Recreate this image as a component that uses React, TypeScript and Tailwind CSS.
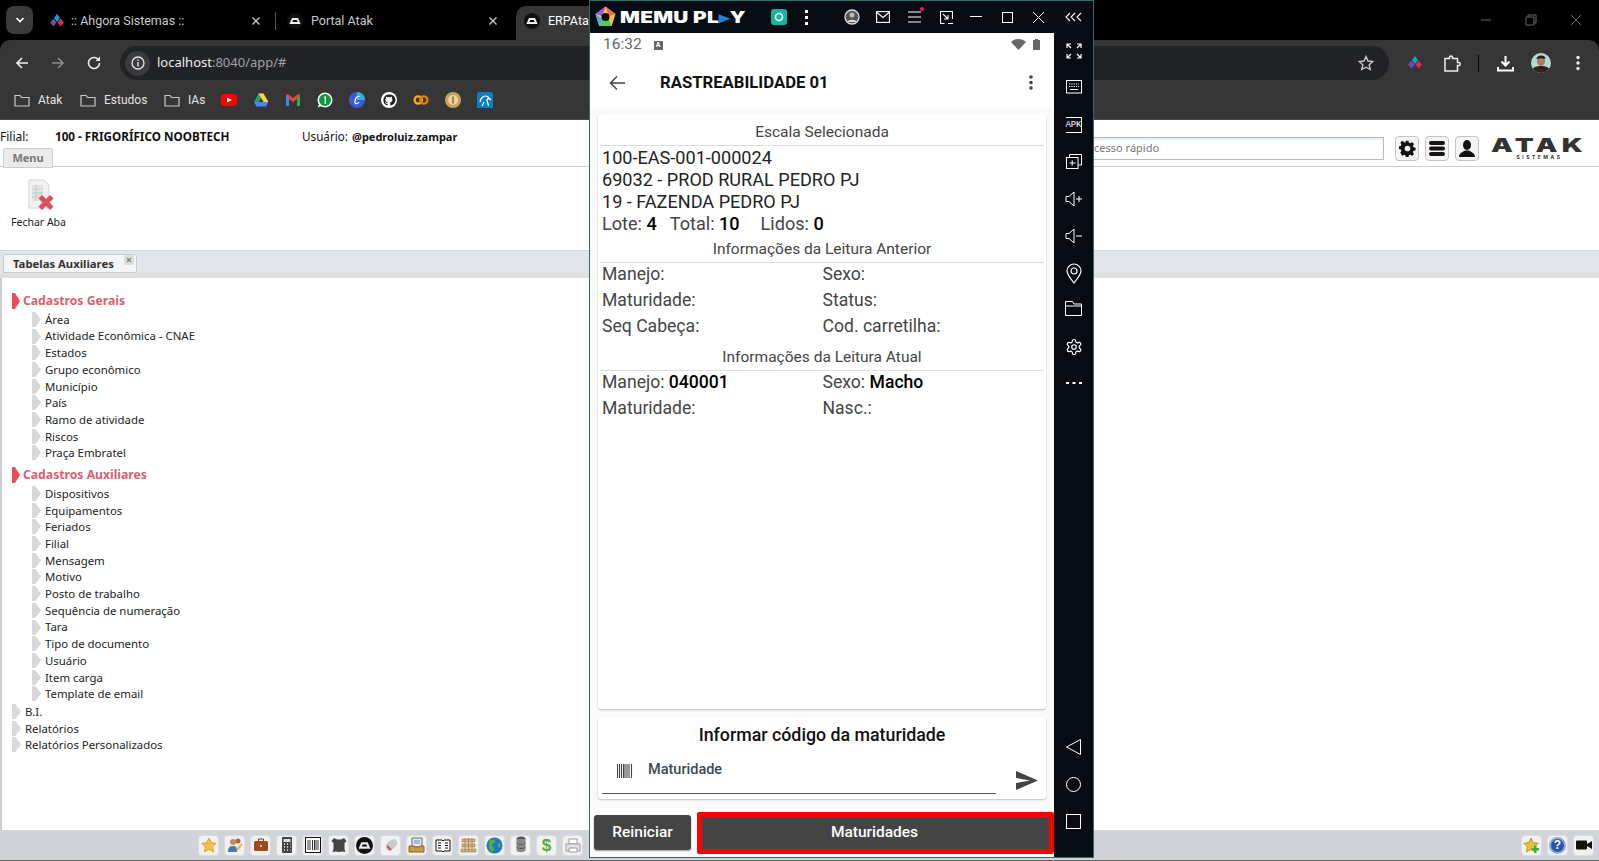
import React from "react";

const S = ({ w, h, vb, children, className = "" }: { w: number; h: number; vb?: string; children: React.ReactNode; className?: string }) => (
  <svg width={w} height={h} viewBox={vb ?? `0 0 ${w} ${h}`} fill="none" className={"block shrink-0 " + className}>{children}</svg>
);

const AhgoraIcon = () => (
  <S w={16} h={16}>
    <path d="M8 1l3 4-3 4-3-4z" fill="#1d9bd8" />
    <path d="M4.5 5.5l3 4-3 4-3.5-4z" fill="#6a4fa3" />
    <path d="M11.5 5.5l3.5 4-3.5 4-3-4z" fill="#e8264f" />
  </S>
);
const AtakRound = ({ s = 16 }: { s?: number }) => (
  <S w={s} h={s} vb="0 0 16 16">
    <circle cx="8" cy="8" r="8" fill="#111" />
    <path d="M5 5h6l2.6 6H2.4z" fill="#eee" />
    <path d="M6.2 7h3.6l.8 2H5.4z" fill="#111" />
  </S>
);
const Folder = () => (
  <S w={16} h={14}>
    <path d="M1 2.5h5l1.5 2h7.5v8.5H1z" stroke="#c8cacc" strokeWidth="1.2" />
  </S>
);
const TabX = ({ c = "#c7c7c7" }: { c?: string }) => (
  <S w={10} h={10}><path d="M1.5 1.5l7 7M8.5 1.5l-7 7" stroke={c} strokeWidth="1.4" /></S>
);

const Bookmark = ({ label, w }: { label: string; w: string }) => (
  <div className={"flex items-center gap-[8px] text-[12px] text-[#e3e3e3] " + w} style={{ fontFamily: "Roboto, sans-serif" }}><Folder /><span>{label}</span></div>
);

const BookmarkIcons = () => (
  <div className="flex items-center gap-[16px]">
    <S w={16} h={16}><rect y="2" width="16" height="12" rx="3" fill="#f00" /><path d="M6 5.5l5 2.5-5 2.5z" fill="#fff" /></S>
    <S w={16} h={16}><path d="M5.5 1.5h5L6 10H1z" fill="#1fa463" /><path d="M5.5 1.5h5l5 8.5h-5z" fill="#ffd04b" /><path d="M1 10h14.5L13 14.5H3.5z" fill="#4688f1" /></S>
    <S w={16} h={16}><path d="M1 3v11h3V7l4 3 4-3v7h3V3l-2-1-5 4-5-4z" fill="#ea4335" /><path d="M1 3v11h3V6z" fill="#4285f4" /><path d="M15 3v11h-3V6z" fill="#34a853" /></S>
    <S w={16} h={16}><circle cx="8" cy="8" r="7.5" fill="#fff" /><circle cx="8" cy="8" r="6" fill="#0a9c3f" /><path d="M0.5 15.5l2-4 2 2.5z" fill="#fff" /><path d="M7 5l2-1v8H7.6V5.8L7 6z" fill="#fff" /></S>
    <S w={16} h={16}><circle cx="8" cy="8" r="8" fill="#3b5bdb" /><path d="M8 0a8 8 0 0 1 8 8H8z" fill="#2fb5d8" /><path d="M10.5 4.5C7 3 5 10 6.5 11.5c1 .6 3-.6 3.6-1.5" stroke="#fff" strokeWidth="1.3" /></S>
    <S w={16} h={16}><circle cx="8" cy="8" r="8" fill="#fff" /><path d="M8 2.5a5.6 5.6 0 0 0-1.8 10.9c.3 0 .4-.1.4-.3v-1.2c-1.5.3-1.9-.7-1.9-.7-.3-.6-.6-.8-.6-.8-.5-.3 0-.3 0-.3.6 0 .9.6.9.6.5.8 1.300.6 1.600.4 0-.3.2-.6.3-.7-1.200-.1-2.500-.6-2.500-2.700 0-.6.2-1.100.6-1.500-.1-.1-.3-.7 0-1.500 0 0 .5-.1 1.500.6a5 5 0 0 1 2.800 0c1-.7 1.500-.6 1.500-.6.3.8.1 1.400 0 1.500.4.4.6.9.6 1.500 0 2.100-1.300 2.600-2.500 2.700.2.2.4.5.4 1v1.900c0 .2.1.3.4.3A5.600 5.600 0 0 0 8 2.500z" fill="#222" /></S>
    <S w={16} h={16}><circle cx="5.2" cy="8" r="3.6" stroke="#f9a825" strokeWidth="2.400" /><circle cx="10.800" cy="8" r="3.600" stroke="#e67c00" strokeWidth="2.400" /></S>
    <S w={16} h={16}><circle cx="8" cy="8" r="8" fill="#c9a25c" /><circle cx="8" cy="8" r="5" fill="#e9d3a3" /><path d="M8 4.500v7" stroke="#a8813c" strokeWidth="2" /></S>
    <S w={16} h={16}><rect width="16" height="18" rx="2" fill="#0b7fc4" /><path d="M3 10c1-6 6-7 8-5l3 3-3-1.500-1 1.500 1.500 6M5 14l2-4" stroke="#fff" strokeWidth="1.200" /></S>
  </div>
);

const ChromeBars = () => (
  <header className="h-[120px] bg-black shrink-0 border-b border-[#4a4a4a]">
    <div className="h-[40px] flex items-start pl-[6px] relative">
      <div className="mt-[6px] w-[27px] h-[28px] rounded-[8px] bg-[#3a3a3a] flex items-center justify-center mr-[16px]">
        <S w={10} h={7}><path d="M1.500 1l3.500 3.500L8.500 1" stroke="#fff" strokeWidth="1.600" /></S>
      </div>
      <div className="flex items-center h-[34px] mt-[4px] w-[212px] text-[12.500px] text-[#c8cacc] justify-between" style={{ fontFamily: "Roboto, sans-serif" }}>
        <div className="flex items-center"><AhgoraIcon /><span className="ml-[6px]">:: Ahgora Sistemas ::</span></div>
        <TabX />
      </div>
      <div className="w-[1px] h-[18px] bg-[#555] mt-[12px] ml-[14px] mr-[11px]" />
      <div className="flex items-center h-[34px] mt-[4px] w-[211px] text-[12.500px] text-[#c8cacc] justify-between" style={{ fontFamily: "Roboto, sans-serif" }}>
        <div className="flex items-center"><AtakRound /><span className="ml-[8px]">Portal Atak</span></div>
        <TabX />
      </div>
      <div className="ml-[18px] mt-[6px] h-[34px] pb-[4px] flex-1 max-w-[140px] rounded-t-[10px] bg-[#363636] pl-[8px] flex items-center text-[12.500px] text-white" style={{ fontFamily: "Roboto, sans-serif" }}>
        <AtakRound /><span className="ml-[8px]">ERPAtak</span>
      </div>
      <div className="ml-auto mr-[17px] mt-[14px] flex items-center gap-[33px]">
        <S w={12} h={12}><path d="M1 6h10" stroke="#666" /></S>
        <S w={12} h={12}><path d="M1 3h8v8H1zM3 3V1h8v8H9" stroke="#666" /></S>
        <S w={12} h={12}><path d="M1 1l10 10M11 1L1 11" stroke="#666" /></S>
      </div>
    </div>
    <div className="h-[79px] bg-[#363636] rounded-t-[10px]">
      <div className="h-[46px] flex items-center relative">
        <div className="w-[120px] flex items-center pl-[15px] gap-[22px] shrink-0">
          <S w={14} h={14}><path d="M13 7H2M7 2L2 7l5 5" stroke="#eee" strokeWidth="1.600" /></S>
          <S w={14} h={14}><path d="M1 7h11M7 2l5 5-5 5" stroke="#8c8c8c" strokeWidth="1.600" /></S>
          <S w={14} h={14}><path d="M12.500 7a5.500 5.500 0 1 1-1.600-3.900" stroke="#eee" strokeWidth="1.600" /><path d="M13 0.500v4.500H8.500z" fill="#eee" /></S>
        </div>
        <div className="w-[1269px] h-[34px] rounded-full bg-[#212327] flex items-center pl-[5px] pr-[15px]">
          <div className="w-[25px] h-[25px] rounded-full bg-[#3a3b3e] flex items-center justify-center">
            <S w={14} h={14}><circle cx="7" cy="7" r="6" stroke="#e8e8e8" strokeWidth="1.300" /><path d="M7 6v4.500M7 3.500v1.500" stroke="#e8e8e8" strokeWidth="1.400" /></S>
          </div>
          <span className="ml-[7px] text-[13px] text-[#eee]">localhost<span className="text-[#a0a2a5]">:8040/app/#</span></span>
          <div className="ml-auto">
            <S w={16} h={16}><path d="M8 1.500l2 4.500 4.800.5-3.600 3.200 1 4.800L8 12.200l-4.200 2.300 1-4.800L1.200 6.500 6 6z" stroke="#c8c8c8" strokeWidth="1.400" /></S>
          </div>
        </div>
        <div className="ml-[18px] flex items-center">
          <AhgoraIcon />
          <div className="ml-[21px]"><S w={17} h={17}><path d="M1 3.500h4.500V2c0-1.500 3-1.500 3 0v1.500H13.500v4h1.500c1.500 0 1.500 3 0 3h-1.500v5.500H1z" stroke="#eee" strokeWidth="1.500" /></S></div>
          <div className="w-[1px] h-[17px] bg-black ml-[17px]" />
          <div className="ml-[18px]"><S w={17} h={17}><path d="M8.500 1v9M4.500 6.500l4 4 4-4" stroke="#fff" strokeWidth="2" /><path d="M1 12v3.500h15V12" stroke="#fff" strokeWidth="2" /></S></div>
          <div className="ml-[17px]">
            <svg width="20" height="20" viewBox="0 0 20 20" className="block rounded-full">
              <rect width="20" height="20" fill="#b9d6cc" />
              <path d="M0 20c1-6 5-7 10-7s9 1 10 7z" fill="#2e2322" />
              <ellipse cx="10" cy="8" rx="4" ry="5" fill="#a87c66" />
              <path d="M5.500 6c0-4 8-5 9-1l-1 1c-2-1-5-1-7 0z" fill="#2a1f1c" />
            </svg>
          </div>
          <div className="ml-[25px]"><S w={4} h={16}><circle cx="2" cy="2.500" r="1.700" fill="#eee" /><circle cx="2" cy="8" r="1.700" fill="#eee" /><circle cx="2" cy="13.500" r="1.700" fill="#eee" /></S></div>
        </div>
      </div>
      <div className="h-[28px] flex items-center pl-[14px]">
        <Bookmark label="Atak" w="w-[66px]" />
        <Bookmark label="Estudos" w="w-[84px]" />
        <Bookmark label="IAs" w="w-[57px]" />
        <BookmarkIcons />
      </div>
    </div>
  </header>
);

const Gear = ({ s, c }: { s: number; c: string }) => (
  <S w={s} h={s} vb="0 0 24 24">
    <path d="M10 1h4l.6 3 2.200.9 2.500-1.700 2.800 2.800-1.700 2.500.9 2.200 3 .6v4l-3 .6-.9 2.200 1.700 2.500-2.800 2.800-2.500-1.700-2.200.9-.6 3h-4l-.6-3-2.200-.9-2.500 1.700L1.900 18.600l1.700-2.500-.9-2.200-3-.6v-4l3-.6.9-2.200L1.900 4 4.700 1.200 7.200 2.900 9.400 4z" transform="translate(0 0) scale(0.96)" fill={c} />
    <circle cx="12" cy="12" r="4" fill="#f4f4f4" />
  </S>
);

const IconBtn = ({ children }: { children: React.ReactNode }) => (
  <div className="w-[24px] h-[25px] rounded-[4px] border border-[#c4c4c4] bg-[#f4f4f4] flex items-center justify-center">{children}</div>
);

const TopHeader = () => (
  <div className="h-[47px] relative shrink-0 border-b border-[#ccc] bg-white">
    <div className="flex items-center h-[34px] text-[12px] text-[#111]">
      <span className="w-[55px]">Filial:</span>
      <b className="w-[247px] text-[11.700px]">100 - FRIGORÍFICO NOOBTECH</b>
      <span className="w-[50px] text-[11.700px]">Usuário:</span>
      <b className="text-[11px]">@pedroluiz.zampar</b>
    </div>
    <div className="absolute left-[3px] top-[28px] h-[20px] w-[50px] rounded-t-[3px] border border-[#ccc] bg-[#eaeaea] flex items-center justify-center text-[11px] font-bold text-[#777]">Menu</div>
    <div className="absolute right-[13px] top-[16px] flex items-center">
      <div className="w-[340px] h-[23px] border border-[#b4bccb] bg-white text-[11px] text-[#777] pl-[42px] flex items-center shadow-[inset_0_2px_3px_#e5ece8]">Acesso rápido</div>
      <div className="ml-[11px] flex gap-[6px]">
        <IconBtn><Gear s={17} c="#111" /></IconBtn>
        <IconBtn>
          <S w={18} h={17}><rect x="1" y="1" width="16" height="4" rx="2" fill="#1a1212" /><rect x="1" y="6.500" width="16" height="4" rx="2" fill="#1a1212" /><rect x="1" y="12" width="16" height="4" rx="2" fill="#1a1212" /></S>
        </IconBtn>
        <IconBtn>
          <S w={18} h={19}><ellipse cx="9" cy="6" rx="4" ry="5" fill="#111" /><path d="M1 18c0-4 4-5 6-6.500h4c2 1.500 6 2.500 6 6.500z" fill="#111" /></S>
        </IconBtn>
      </div>
      <div className="ml-[14px] w-[93px] flex flex-col items-center text-[#333] leading-none" style={{ fontFamily: "Inter, sans-serif" }}>
        <span className="text-[19px] font-black tracking-[3px] h-[16px] leading-[16px] scale-x-[1.450]">ATAK</span>
        <span className="text-[5px] font-bold tracking-[2.500px] mt-[1px]">SISTEMAS</span>
      </div>
    </div>
  </div>
);

const Ribbon = () => (
  <div className="h-[84px] shrink-0 bg-white border-b border-[#d4d8dc] pl-[11px] pt-[12px]">
    <div className="w-[55px] flex flex-col items-center">
      <S w={32} h={32}>
        <path d="M6 1h15l5 5v23H6z" fill="#f1f1f1" stroke="#d5d5d5" />
        <path d="M9 6h11v16H9z" fill="#e3e3e3" />
        <path d="M9 10h11M9 14h11M9 18h11M13 6v16" stroke="#c9c9c9" />
        <path d="M19 16l4 4 4-4 3.500 3.500-4 4 4 4L27 31l-4-4-4 4-3.500-3.500 4-4-4-4z" fill="#d9505b" />
      </S>
      <span className="text-[10.500px] text-[#222] mt-[4px] whitespace-nowrap">Fechar Aba</span>
    </div>
  </div>
);

const TabStrip = () => (
  <div className="h-[27px] shrink-0 bg-[#e2e6ea] border-b-[5px] border-[#dfdfdf] pl-[3px] pt-[3px]">
    <div className="h-[19px] w-[134px] rounded-t-[3px] border border-[#ccc] bg-[#f4f5f6] flex items-center pl-[9px] pt-[1px] text-[11.300px] font-bold text-[#333] relative">
      Tabelas Auxiliares
      <span className="absolute right-[2px] top-[0px] w-[10px] h-[10px] rounded-[2px] bg-[#ddd] flex items-center justify-center">
        <S w={6} h={6}><path d="M1 1l4 4M5 1L1 5" stroke="#888" strokeWidth="1.200" /></S>
      </span>
    </div>
  </div>
);

const Marker = ({ c, w, h }: { c: string; w: number; h: number }) => (
  <svg width={w} height={h} viewBox="0 0 8 16" preserveAspectRatio="none" className="shrink-0"><path d="M0 0h3l5 8-5 8H0z" fill={c} /></svg>
);

const Group = ({ title, items, pb }: { title: string; items: string[]; pb: string }) => (
  <div>
    <div className="h-[20px] flex items-center pl-[10px] text-[12.200px] font-bold text-[#d9606e]">
      <Marker c="#ec4c60" w={8} h={16} /><span className="ml-[3px]">{title}</span>
    </div>
    <div className={pb}>
      {items.map((i) => (
        <div key={i} className="h-[16.700px] flex items-center pl-[30px] text-[11.400px] text-[#222]">
          <Marker c="#d8d8d8" w={9} h={15} /><span className="ml-[4px] whitespace-nowrap">{i}</span>
        </div>
      ))}
    </div>
  </div>
);

const Leaf = ({ t }: { t: string }) => (
  <div className="h-[16.700px] flex items-center pl-[10px] text-[11.400px] text-[#222]">
    <Marker c="#d8d8d8" w={9} h={15} /><span className="ml-[4px]">{t}</span>
  </div>
);

const Tree = () => (
  <div className="flex-1 bg-white border-l-[2px] border-[#ccc] pt-[13px] min-h-0">
    <Group pb="pb-[4px]" title="Cadastros Gerais" items={["Área", "Atividade Econômica - CNAE", "Estados", "Grupo econômico", "Município", "País", "Ramo de atividade", "Riscos", "Praça Embratel"]} />
    <Group pb="pb-[1px]" title="Cadastros Auxiliares" items={["Dispositivos", "Equipamentos", "Feriados", "Filial", "Mensagem", "Motivo", "Posto de trabalho", "Sequência de numeração", "Tara", "Tipo de documento", "Usuário", "Item carga", "Template de email"]} />
    <Leaf t="B.I." />
    <Leaf t="Relatórios" />
    <Leaf t="Relatórios Personalizados" />
  </div>
);

const TB = ({ children }: { children: React.ReactNode }) => (
  <div className="w-[21px] h-[21px] rounded-[4px] bg-[#f1f1f1] border border-[#dcdcdc] flex items-center justify-center">{children}</div>
);

const star = "M8 1l2.200 4.600 5 .7-3.600 3.500.9 5L8 12.400 3.500 14.800l.9-5L.8 6.300l5-.7z";

const BottomBar = () => (
  <div className="h-[31px] shrink-0 bg-[#d0d4d8] border-b border-[#666] flex items-center pl-[198px] pr-[5px] gap-[5px]">
    <TB><S w={16} h={16}><path d={star} fill="#f5c04a" stroke="#e0a030" /></S></TB>
    <TB><S w={16} h={16}><circle cx="6" cy="5" r="3" fill="#c98b5a" /><circle cx="11" cy="4" r="2.500" fill="#a86a3c" /><path d="M1 15c0-5 2-6 5-6s4 1 4 6z" fill="#3f7fc4" /><path d="M15 7l-5 6" stroke="#e8b93c" strokeWidth="2" /></S></TB>
    <TB><S w={16} h={14}><rect x="1" y="3" width="14" height="10" rx="1.500" fill="#9c4a20" /><path d="M5.500 3V1h5v2" stroke="#6b3415" /><rect x="7" y="7" width="2" height="2" fill="#eac07a" /></S></TB>
    <TB><S w={12} h={16}><rect x="1" width="10" height="16" rx="1" fill="#444" /><rect x="2.500" y="2" width="7" height="3" fill="#ddd" /><path d="M3 7h1M6 7h1M9 7h.5M3 10h1M6 10h1M9 10h.5M3 13h1M6 13h1M9 13h.5" stroke="#eee" strokeWidth="1.500" /></S></TB>
    <TB><S w={16} h={16}><rect x=".5" y=".5" width="15" height="15" fill="#fff" stroke="#111" /><path d="M3 3v10M5 3v10M7.500 3v10M9.500 3v10M11 3v10M13 3v10" stroke="#333" /></S></TB>
    <TB><S w={16} h={16}><path d="M3 1l3 1.500h4L13 1l2.500 3-2 2v6l1 3-3-.5L8 15l-3.500-.5-3 .5 1-3V6l-2-2z" fill="#444" /></S></TB>
    <TB><AtakRound s={17} /></TB>
    <TB><S w={16} h={16}><path d="M3 10c-1-3 5-8 8-8 2 0 4 3 3 5-1 3-6 7-8 7-1.500 0-2.500-2-3-4z" fill="#c9c9c9" /><path d="M4 9l4 4" stroke="#c84c4c" strokeWidth="2" /></S></TB>
    <TB><S w={17} h={16}><path d="M4 1h10v9H4z" fill="#dfe8f4" stroke="#5a6c8a" /><path d="M6 4h6M6 6h6" stroke="#7a8ca8" /><path d="M1 9h5l1 1h4l1-1h4v6H1z" fill="#c99a48" stroke="#8a6420" /></S></TB>
    <TB><S w={16} h={14}><path d="M1 2h6l1 1 1-1h6v11H9l-1 1-1-1H1z" fill="#fff" stroke="#111" /><path d="M3 5h3M3 7.500h3M3 10h3M10 5h3M10 7.500h3M10 10h3" stroke="#111" /></S></TB>
    <TB><S w={17} h={16}><path d="M2 2h13v3H2zM2 7h13v3H2zM1 12h15v3H1z" fill="#d3b581" stroke="#96784a" strokeWidth=".6" /><path d="M5 1v14M8.500 1v14M12 1v14" stroke="#a88a5a" /></S></TB>
    <TB><S w={17} h={17}><circle cx="8.500" cy="8.500" r="8" fill="#1e78c8" /><path d="M4 3c3-2 6 0 5 2s-3 1-3 3 2 2 2 4-1 3-2 3c-3-2-4-7-2-12zM12 6c2 0 3 2 2 5l-2-1z" fill="#5cb030" /></S></TB>
    <TB><S w={12} h={18}><ellipse cx="6" cy="3" rx="4.500" ry="2.500" fill="#555" /><path d="M1.500 3v11c0 3 9 3 9 0V3" fill="#8a8a8a" /><path d="M1.500 7c2 2 7 2 9 0M1.500 11c2 2 7 2 9 0" stroke="#555" /></S></TB>
    <TB><span className="text-[17px] font-bold text-[#59a93a] leading-none" style={{ fontFamily: "Liberation Sans, sans-serif" }}>$</span></TB>
    <TB><S w={16} h={15}><path d="M4 1h8v5H4z" fill="#fff" stroke="#999" /><rect x="1" y="6" width="14" height="7" fill="#e4e4e4" stroke="#999" /><path d="M4 10h8v4H4z" fill="#fff" stroke="#999" /></S></TB>
    <div className="ml-auto flex items-center gap-[5px]">
      <TB><S w={17} h={17}><path d={star} fill="#e9c23c" stroke="#b9962a" /><path d="M11 8.500h2.500V11H16v2.500h-2.500V16H11v-2.500H8.500V11H11z" fill="#3fae3a" /></S></TB>
      <TB><div className="w-[17px] h-[17px] rounded-full bg-[#2a56b0] border-[2px] border-[#8fa8d8] text-white text-[12px] font-bold flex items-center justify-center leading-none" style={{ fontFamily: "Liberation Sans, sans-serif" }}>?</div></TB>
      <TB><S w={16} h={10}><rect y="0.500" width="11" height="9" rx="1" fill="#111" /><path d="M11 4l5-3v8l-5-3z" fill="#111" /></S></TB>
    </div>
  </div>
);

const Row = ({ l, v, r, rv }: { l: string; v?: string; r: string; rv?: string }) => (
  <div className="h-[26px] grid grid-cols-[220.500px_1fr] items-center text-[17.600px] text-[#444]">
    <span>{l}{v && <> <b className="font-medium text-black">{v}</b></>}</span>
    <span>{r}{rv && <> <b className="font-medium text-black">{rv}</b></>}</span>
  </div>
);

const SectionTitle = ({ t }: { t: string }) => (
  <div className="h-[27px] text-center text-[15.500px] text-[#444] leading-[26px] border-b border-[#ddd] -mx-[2px] mb-[-2px]">{t}</div>
);

const TitleBar = () => (
  <div className="h-[32px] flex items-center bg-[#070c14] text-white shrink-0">
    <div className="ml-[5px]">
      <S w={21} h={22}>
        <path d="M10.500 0.500L20.500 8l-3.800 12H4.300L0.500 8z" fill="#f6c33a" />
        <path d="M10.500 0.500L20.500 8 14 10z" fill="#ef6a5a" />
        <path d="M10.500 0.500L0.500 8 7 10z" fill="#8a5cf0" />
        <path d="M0.500 8l3.800 12 3-7z" fill="#4aa8ee" />
        <path d="M4.300 20h12.400l-3-7H7z" fill="#5ac85a" />
        <circle cx="10.500" cy="11" r="4" fill="#070c14" />
      </S>
    </div>
    <span className="ml-[4px] w-[128px] text-[16px] font-black tracking-[0.200px] whitespace-nowrap leading-none scale-x-[1.300] origin-left" style={{ fontFamily: "Inter, sans-serif" }}>MEMU PL<span className="text-[#1b87d6]">▸</span>Y</span>
    <div className="ml-[23px] w-[16px] h-[16px] rounded-[3px] bg-[#13b59c] flex items-center justify-center">
      <S w={10} h={10}><circle cx="5" cy="5" r="3.500" stroke="#fff" strokeWidth="1.500" /></S>
    </div>
    <div className="ml-[18px]"><S w={3} h={15}><rect width="3" height="3" fill="#fff" /><rect y="6" width="3" height="3" fill="#fff" /><rect y="12" width="3" height="3" fill="#fff" /></S></div>
    <div className="ml-[36px]"><S w={16} h={16}><circle cx="8" cy="8" r="7" stroke="#ddd" strokeWidth="1.300" fill="#555" /><circle cx="8" cy="6" r="2.500" fill="#bbb" /><path d="M3.500 13c1-3 8-3 9 0" fill="#ddd" /></S></div>
    <div className="ml-[16px]"><S w={14} h={12}><rect x=".6" y=".6" width="12.800" height="10.800" stroke="#fff" strokeWidth="1.100" /><path d="M1 1.500l6 5 6-5" stroke="#fff" strokeWidth="1.100" /></S></div>
    <div className="ml-[18px] relative"><S w={13} h={12}><path d="M0 1h13M0 6h13M0 11h13" stroke="#fff" strokeWidth="1.100" /></S><span className="absolute -top-[4px] -right-[3px] w-[4px] h-[4px] rounded-full bg-[#ff1166]" /></div>
    <div className="ml-[19px]"><S w={13} h={13}><path d="M12.500 8V.5H.5v12h4" stroke="#fff" strokeWidth="1.100" /><path d="M3 3l5 5M4 8h4V4M8 12.500h5" stroke="#fff" strokeWidth="1.100" /></S></div>
    <div className="ml-[17px]"><S w={12} h={2}><rect width="12" height="1" fill="#fff" /></S></div>
    <div className="ml-[20px]"><S w={11} h={11}><rect x=".5" y=".5" width="10" height="10" stroke="#fff" /></S></div>
    <div className="ml-[20px]"><S w={11} h={11}><path d="M0 0l11 11M11 0L0 11" stroke="#fff" /></S></div>
    <div className="ml-[21px]"><S w={17} h={10}><path d="M5 1L1 5l4 4M10 1L6 5l4 4M16 1l-4 4 4 4" stroke="#fff" strokeWidth="1.100" /></S></div>
  </div>
);

const SideBar = () => (
  <div className="w-[39px] bg-[#070c14] flex flex-col items-center pt-[10px] shrink-0">
    <div className="h-[37px] flex items-start"><S w={16} h={16}><path d="M1 5V1h4M1 1l4 4M11 1h4v4M15 1l-4 4M1 11v4h4M1 15l4-4M15 11v4h-4M15 15l-4-4" stroke="#fff" strokeWidth="1.200" /></S></div>
    <div className="h-[37px] flex items-start"><S w={16} h={14}><rect x=".5" y=".5" width="15" height="12.500" stroke="#fff" /><path d="M3 4h10M3 6.500h10" stroke="#fff" strokeDasharray="1.300 1" /><path d="M4 9.500h8" stroke="#fff" /></S></div>
    <div className="h-[37px] flex items-start"><div className="w-[16px] h-[16px] border-r border-t border-b border-white text-white text-[9px] leading-none flex items-center justify-start tracking-[-0.200px]" style={{ fontFamily: "Liberation Mono, monospace" }}>APK</div></div>
    <div className="h-[37px] flex items-start"><S w={16} h={15}><rect x=".5" y="3.500" width="11.500" height="11" stroke="#fff" /><path d="M3.500 3.500V.5h12v10.500H12M3.500 9h6M6.200 6.300v5.500" stroke="#fff" /></S></div>
    <div className="h-[37px] flex items-start"><S w={18} h={16}><path d="M1 5.500h3L9 1v14L4 10.500H1z" stroke="#fff" /><path d="M11 8h6M14 5v6" stroke="#fff" /></S></div>
    <div className="h-[35px] flex items-start"><S w={18} h={16}><path d="M1 5.500h3L9 1v14L4 10.500H1z" stroke="#fff" /><path d="M11 8h6" stroke="#fff" /></S></div>
    <div className="h-[38px] flex items-start"><S w={16} h={21}><path d="M8 20C4 15 1 11 1 8a7 7 0 0 1 14 0c0 3-3 7-7 12z" stroke="#fff" strokeWidth="1.200" /><circle cx="8" cy="8" r="3" stroke="#fff" strokeWidth="1.200" /></S></div>
    <div className="h-[37px] flex items-start"><S w={17} h={15}><path d="M.5 14.500V.5h7l1.500 2.500h7.500v11.500zM.5 5h16" stroke="#fff" /></S></div>
    <div className="h-[37px] flex items-start"><Gear2 /></div>
    <div className="mt-[7px]"><S w={16} h={2}><rect width="3" height="2" fill="#fff" /><rect x="6.500" width="3" height="2" fill="#fff" /><rect x="13" width="3" height="2" fill="#fff" /></S></div>
    <div className="mt-auto mb-[28px] flex flex-col items-center gap-[22px]">
      <S w={15} h={16}><path d="M14.500 .5v15L.5 8z" stroke="#fff" /></S>
      <S w={15} h={15}><circle cx="7.500" cy="7.500" r="7" stroke="#fff" /></S>
      <S w={15} h={15}><rect x=".5" y=".5" width="14" height="14" stroke="#fff" /></S>
    </div>
  </div>
);

const Gear2 = () => (
  <svg width="18" height="18" viewBox="0 0 24 24" fill="none" stroke="#fff" strokeWidth="1.600" className="block">
    <path d="M12.220 2h-.44a2 2 0 0 0-2 2v.18a2 2 0 0 1-1 1.730l-.43.25a2 2 0 0 1-2 0l-.15-.08a2 2 0 0 0-2.730.73l-.22.38a2 2 0 0 0 .73 2.730l.15.1a2 2 0 0 1 1 1.720v.51a2 2 0 0 1-1 1.740l-.15.09a2 2 0 0 0-.73 2.730l.22.38a2 2 0 0 0 2.730.73l.15-.08a2 2 0 0 1 2 0l.43.25a2 2 0 0 1 1 1.730V20a2 2 0 0 0 2 2h.44a2 2 0 0 0 2-2v-.18a2 2 0 0 1 1-1.730l.43-.25a2 2 0 0 1 2 0l.15.08a2 2 0 0 0 2.730-.73l.22-.39a2 2 0 0 0-.73-2.730l-.15-.08a2 2 0 0 1-1-1.740v-.5a2 2 0 0 1 1-1.740l.15-.09a2 2 0 0 0 .73-2.730l-.22-.38a2 2 0 0 0-2.730-.73l-.15.08a2 2 0 0 1-2 0l-.43-.25a2 2 0 0 1-1-1.730V4a2 2 0 0 0-2-2z" />
    <circle cx="12" cy="12" r="3" />
  </svg>
);

const Phone = () => (
  <div className="flex-1 min-w-0 bg-white flex flex-col text-black" style={{ fontFamily: "Roboto, sans-serif" }}>
    <div className="h-[24px] flex items-center pl-[13px] pr-[14px] text-[15.500px] text-[#666] shrink-0">
      <span>16:32</span>
      <div className="ml-[12px] w-[9px] h-[9px] bg-[#666] text-white text-[7px] font-bold flex items-center justify-center leading-none">A</div>
      <div className="ml-auto flex items-center gap-[7px] pb-[2px]">
        <S w={15} h={11}><path d="M0 3c4-4 11-4 15 0L7.500 11z" fill="#666" /></S>
        <S w={7} h={12}><path d="M2 1h3v1h2v10H0V2h2z" fill="#666" /></S>
      </div>
    </div>
    <div className="h-[51px] flex items-center pl-[19px] pr-[21px] shrink-0">
      <S w={16} h={16}><path d="M16 8H1.500M8 1.500L1.500 8 8 14.500" stroke="#444" strokeWidth="1.500" /></S>
      <span className="ml-[35px] text-[16.700px] font-bold text-[#111]">RASTREABILIDADE 01</span>
      <div className="ml-auto"><S w={4} h={15}><circle cx="2" cy="2" r="1.800" fill="#444" /><circle cx="2" cy="7.500" r="1.800" fill="#444" /><circle cx="2" cy="13" r="1.800" fill="#444" /></S></div>
    </div>
    <div className="flex-1 min-h-0 bg-[#fafafa] px-[8px] pt-[6px] flex flex-col gap-[8px]">
      <div className="h-[595px] bg-white rounded-[3px] shadow-[0_1px_2px_rgba(0,0,0,0.25)] px-[4px] pt-[5px] shrink-0">
        <SectionTitle t="Escala Selecionada" />
        <div className="text-[18.100px] text-[#222] leading-[22px] pt-[3px] pb-[1px]">
          <div>100-EAS-001-000024</div>
          <div>69032 - PROD RURAL PEDRO PJ</div>
          <div>19 - FAZENDA PEDRO PJ</div>
          <div className="text-[#444]">Lote: <b className="font-medium text-black">4</b><span className="ml-[13px]">Total: </span><b className="font-medium text-black">10</b><span className="ml-[21px]">Lidos: </span><b className="font-medium text-black">0</b></div>
        </div>
        <SectionTitle t="Informações da Leitura Anterior" />
        <Row l="Manejo:" r="Sexo:" />
        <Row l="Maturidade:" r="Status:" />
        <Row l="Seq Cabeça:" r="Cod. carretilha:" />
        <div className="h-[5px]" />
        <SectionTitle t="Informações da Leitura Atual" />
        <Row l="Manejo:" v="040001" r="Sexo:" rv="Macho" />
        <Row l="Maturidade:" r="Nasc.:" />
      </div>
      <div className="h-[82px] bg-white rounded-[3px] shadow-[0_1px_2px_rgba(0,0,0,0.25)] shrink-0 pt-[6px] px-[4px]">
        <div className="text-center text-[17.800px] font-medium text-[#111] leading-[24px]">Informar código da maturidade</div>
        <div className="flex items-start mt-[9px]">
          <div className="w-[394px] h-[38px] border-b border-[#555] flex items-start pt-[5px] pl-[15px]">
            <div className="mt-[3px]"><S w={16} h={14}><path d="M.5 0v14M2.500 0v14M4.500 0v14M6.500 0v14M8 0v14M10 0v14M12 0v14M14.500 0v14" stroke="#444" strokeWidth="1.100" /></S></div>
            <span className="ml-[15px] text-[14.500px] font-medium text-[#3a4a54] leading-[18px]">Maturidade</span>
          </div>
          <div className="ml-[20px] mt-[15px]"><S w={22} h={19}><path d="M0 0l22 9.500L0 19V12l14-2.500L0 7z" fill="#444" /></S></div>
        </div>
      </div>
    </div>
    <div className="h-[49px] bg-white shrink-0 flex items-center pl-[4px] text-[15.500px] font-medium text-white">
      <div className="w-[97px] h-[35px] rounded-[3px] bg-[#444] flex items-center justify-center shadow-[0_1px_2px_rgba(0,0,0,0.4)]">Reiniciar</div>
      <div className="ml-[6px] flex-1 h-[42px] pr-[2px] rounded-[2px] border-[5px] border-[#f00] bg-[#444] flex items-center justify-center">Maturidades</div>
    </div>
  </div>
);

const Emulator = () => (
  <div className="absolute left-[589px] top-0 w-[505px] h-[858px] border-x border-b border-t border-[#2e6e62] flex flex-col">
    <TitleBar />
    <div className="flex-1 min-h-0 flex">
      <Phone />
      <SideBar />
    </div>
  </div>
);

export default function App() {
  return (
    <div className="relative w-[1599px] h-[861px] overflow-hidden bg-white flex flex-col" style={{ fontFamily: '"Noto Sans", sans-serif' }}>
      <ChromeBars />
      <TopHeader />
      <Ribbon />
      <TabStrip />
      <Tree />
      <BottomBar />
      <Emulator />
    </div>
  );
}
